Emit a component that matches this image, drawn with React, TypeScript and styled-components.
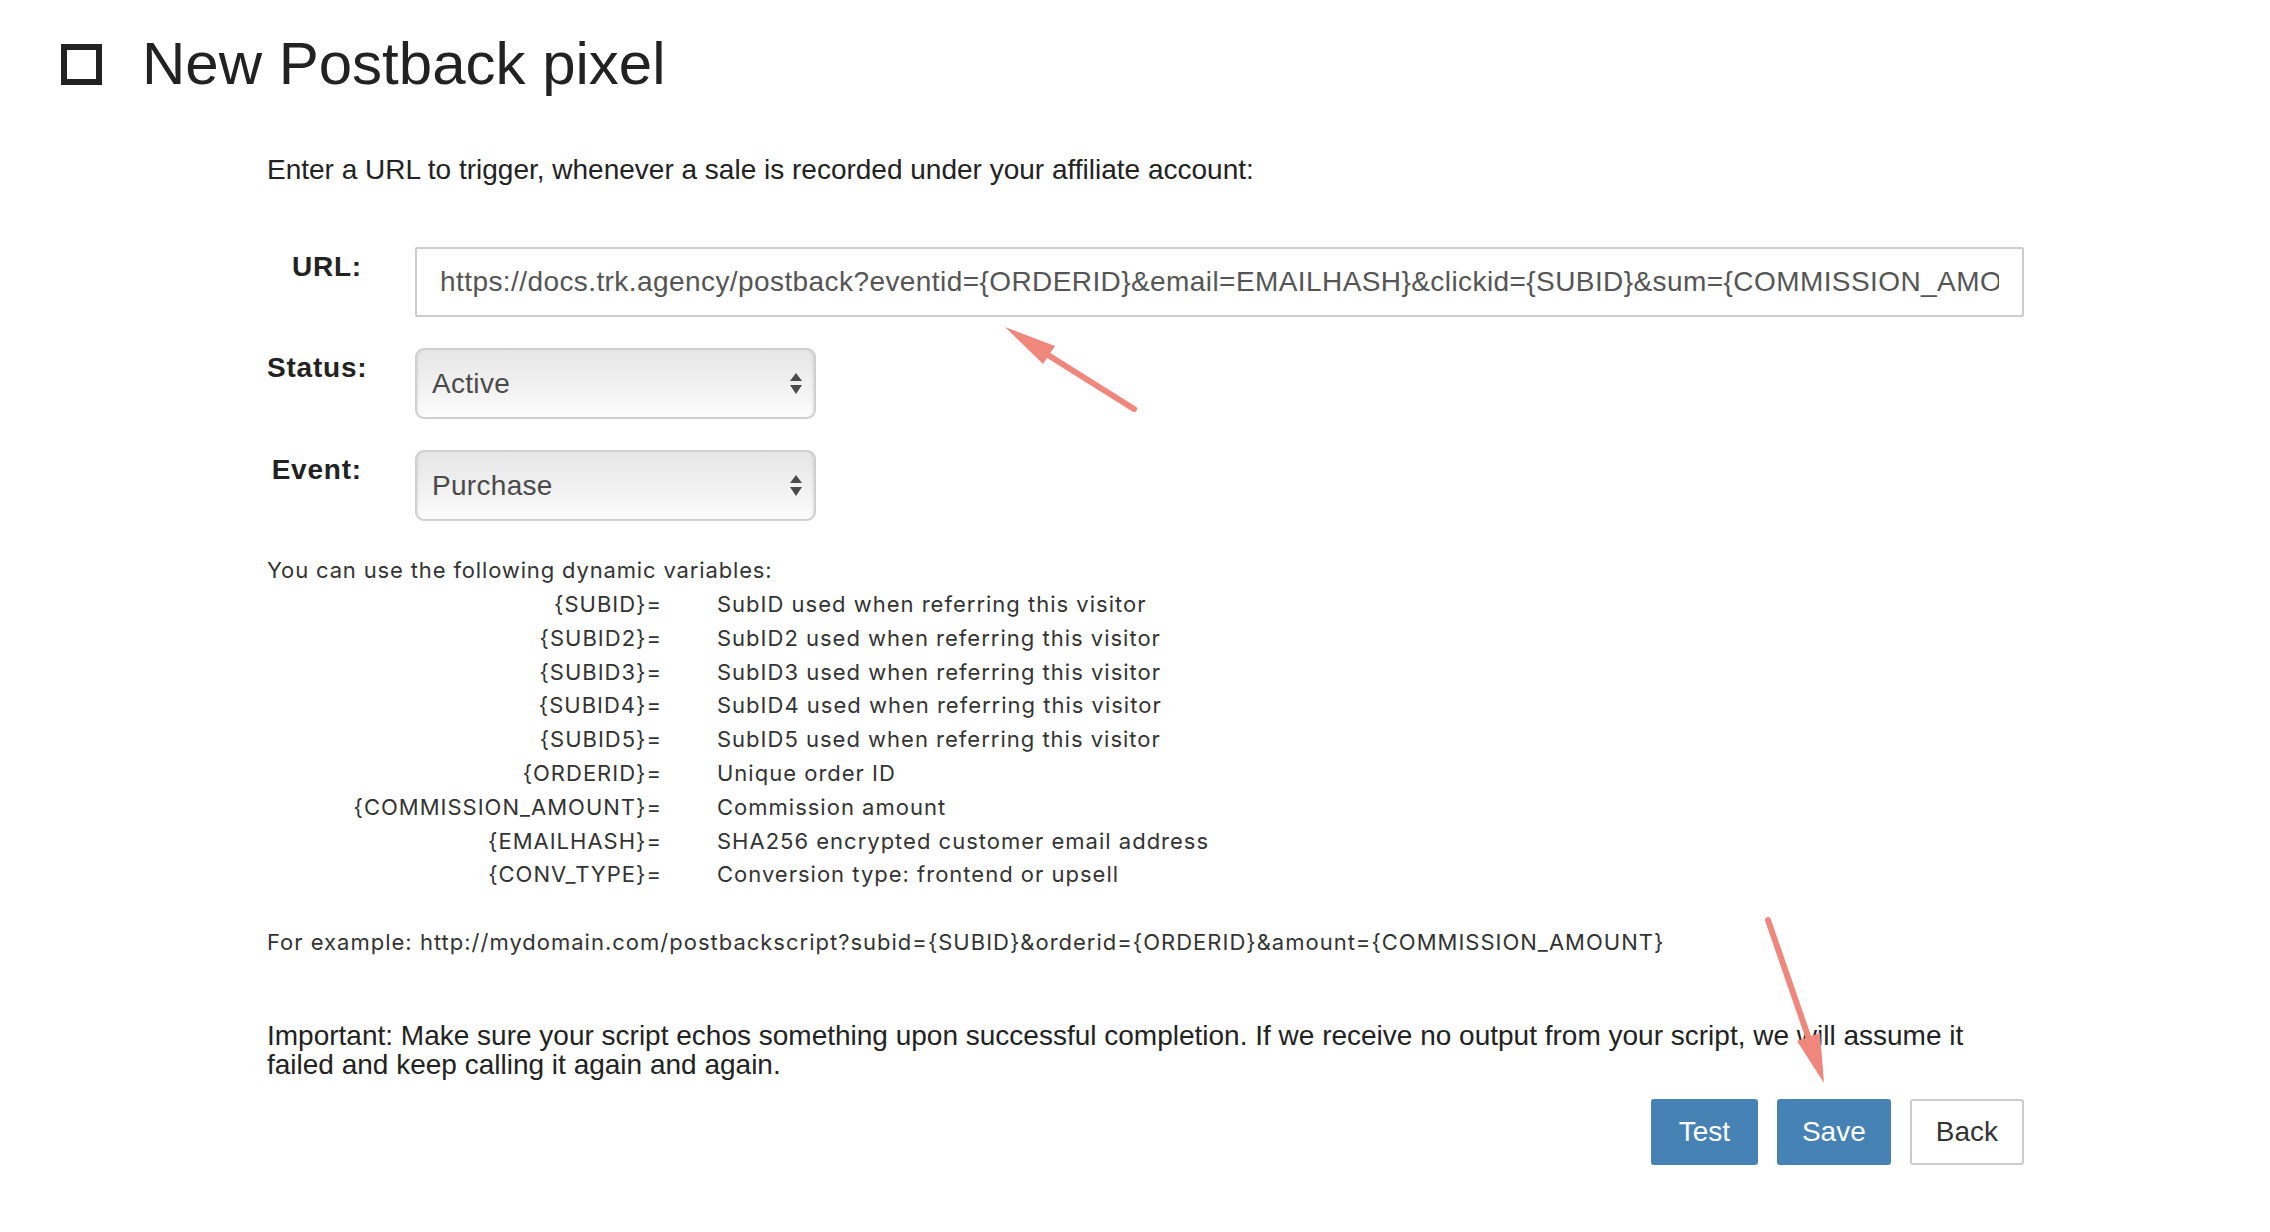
import styled, { createGlobalStyle } from 'styled-components';

const GlobalStyle = createGlobalStyle`
	html, body {
		margin: 0;
		padding: 0;
		background: #ffffff;
	}

	body {
		font-family: 'Liberation Sans', Arial, Helvetica, sans-serif;
		color: #222222;
	}
`;

const Page = styled.div`
	position: relative;
	width: 2270px;
	min-height: 1232px;
	padding-top: 34px;
	box-sizing: border-box;
`;

const Header = styled.header`
	display: flex;
	align-items: center;
	gap: 40px;
	height: 60px;
	padding-left: 61px;
`;

const CheckIcon = styled.span`
	display: block;
	width: 41px;
	height: 41px;
	border: 6px solid #222222;
	box-sizing: border-box;
`;

const Title = styled.h1`
	margin: 0;
	font-size: 60px;
	line-height: 60px;
	font-weight: 400;
	color: #222222;
`;

const Content = styled.main`
	width: 1757px;
	margin-left: 267px;
	display: flex;
	flex-direction: column;
`;

const Intro = styled.p`
	margin: 60px 0 0;
	font-size: 28px;
	line-height: 32px;
	color: #222222;
`;

const Form = styled.div`
	display: grid;
	grid-template-columns: 95px 1fr;
	column-gap: 53px;
	row-gap: 31px;
	margin-top: 61px;
	align-items: start;
`;

const Label = styled.label`
	padding-top: 4px;
	font-size: 28px;
	line-height: 32px;
	font-weight: 700;
	letter-spacing: 0.8px;
	text-align: right;
	white-space: nowrap;
	color: #222222;
`;

const UrlInput = styled.input`
	display: block;
	width: 100%;
	height: 70px;
	box-sizing: border-box;
	padding: 0 23px;
	border: 2px solid #cccccc;
	border-radius: 2px;
	background: #ffffff;
	font-family: 'Liberation Sans', Arial, Helvetica, sans-serif;
	font-size: 28px;
	letter-spacing: 0.42px;
	color: #555555;
	outline: none;
`;

const SelectBox = styled.div`
	display: flex;
	align-items: center;
	justify-content: space-between;
	width: 401px;
	height: 71px;
	box-sizing: border-box;
	padding: 0 12px 0 15px;
	border: 2px solid #cfcfcf;
	border-radius: 9px;
	background: linear-gradient(to bottom, #e6e6e6 0%, #f1f1f1 55%, #fcfcfc 100%);
	box-shadow: inset 3px 0 3px -2px rgba(0, 0, 0, 0.08), inset -3px 0 3px -2px rgba(0, 0, 0, 0.1);
	font-size: 28px;
	letter-spacing: 0.3px;
	color: #4a4a4a;
`;

const Help = styled.section`
	margin-top: 31px;
	font-family: Inter, 'Liberation Sans', sans-serif;
	font-size: 22px;
	letter-spacing: 1px;
	color: #333333;
`;

const HelpTitle = styled.div`
	line-height: 36px;
	letter-spacing: 0.85px;
`;

const VarTable = styled.div`
	display: grid;
	grid-template-columns: 395px auto;
	column-gap: 55px;
	justify-content: start;
	line-height: 33.8px;
`;

const VarKey = styled.span`
	text-align: right;
	white-space: nowrap;
`;

const VarText = styled.span`
	white-space: nowrap;
`;

const Example = styled.p`
	margin: 33px 0 0;
	font-family: Inter, 'Liberation Sans', sans-serif;
	font-size: 22px;
	letter-spacing: 1px;
	line-height: 34px;
	color: #333333;
	white-space: nowrap;
`;

const Important = styled.p`
	margin: 62px 0 0;
	font-size: 28px;
	line-height: 29px;
	color: #222222;
`;

const Actions = styled.div`
	display: flex;
	justify-content: flex-end;
	gap: 19px;
	margin-top: 20px;
`;

const Button = styled.button<{ $primary?: boolean }>`
	min-width: 107px;
	height: 66px;
	padding: 0 ${(p) => (p.$primary ? '25px' : '24px')};
	box-sizing: border-box;
	border: ${(p) => (p.$primary ? '0' : '2px solid #cccccc')};
	border-radius: 3px;
	background: ${(p) => (p.$primary ? '#4682b4' : '#ffffff')};
	color: ${(p) => (p.$primary ? '#ffffff' : '#333333')};
	font-family: 'Liberation Sans', Arial, Helvetica, sans-serif;
	font-size: 28px;
	cursor: pointer;
`;

const Annotations = styled.svg`
	position: absolute;
	top: 0;
	left: 0;
	width: 2270px;
	height: 1232px;
	pointer-events: none;
`;

const SelectArrows = () => (
	<svg width="12" height="21" viewBox="0 0 12 21">
		<path d="M6 0 L12 8 L0 8 Z" fill="#4a4a4a" />
		<path d="M0 12 L12 12 L6 21 Z" fill="#4a4a4a" />
	</svg>
);

const variables: [string, string][] = [
	['{SUBID}=', 'SubID used when referring this visitor'],
	['{SUBID2}=', 'SubID2 used when referring this visitor'],
	['{SUBID3}=', 'SubID3 used when referring this visitor'],
	['{SUBID4}=', 'SubID4 used when referring this visitor'],
	['{SUBID5}=', 'SubID5 used when referring this visitor'],
	['{ORDERID}=', 'Unique order ID'],
	['{COMMISSION_AMOUNT}=', 'Commission amount'],
	['{EMAILHASH}=', 'SHA256 encrypted customer email address'],
	['{CONV_TYPE}=', 'Conversion type: frontend or upsell'],
];

const postbackUrl =
	'https://docs.trk.agency/postback?eventid={ORDERID}&email=EMAILHASH}&clickid={SUBID}&sum={COMMISSION_AMOUNT}';

const App = () => {
	return (
		<Page>
			<GlobalStyle />

			<Header>
				<CheckIcon />
				<Title>New Postback pixel</Title>
			</Header>

			<Content>
				<Intro>Enter a URL to trigger, whenever a sale is recorded under your affiliate account:</Intro>

				<Form>
					<Label>URL:</Label>
					<UrlInput readOnly value={postbackUrl} />

					<Label>Status:</Label>
					<SelectBox>
						<span>Active</span>
						<SelectArrows />
					</SelectBox>

					<Label>Event:</Label>
					<SelectBox>
						<span>Purchase</span>
						<SelectArrows />
					</SelectBox>
				</Form>

				<Help>
					<HelpTitle>You can use the following dynamic variables:</HelpTitle>
					<VarTable>
						{variables.map(([key, text]) => [
							<VarKey key={key}>{key}</VarKey>,
							<VarText key={key + '-t'}>{text}</VarText>,
						])}
					</VarTable>
				</Help>

				<Example>
					For example: http://mydomain.com/postbackscript?subid={'{SUBID}'}&amp;orderid={'{ORDERID}'}
					&amp;amount={'{COMMISSION_AMOUNT}'}
				</Example>

				<Important>
					Important: Make sure your script echos something upon successful completion. If we receive no
					output from your script, we will assume it failed and keep calling it again and again.
				</Important>

				<Actions>
					<Button $primary>Test</Button>
					<Button $primary>Save</Button>
					<Button>Back</Button>
				</Actions>
			</Content>

			{/* red annotation arrows drawn over the form */}
			<Annotations viewBox="0 0 2270 1232">
				<line x1="1134" y1="409" x2="1040" y2="350" stroke="#f0877d" strokeWidth="6" strokeLinecap="round" />
				<polygon points="1005,327 1055,346 1043,364" fill="#f0877d" />
				<line x1="1768" y1="920" x2="1810" y2="1042" stroke="#f0877d" strokeWidth="6" strokeLinecap="round" />
				<polygon points="1824,1083 1797,1041 1820,1033" fill="#f0877d" />
			</Annotations>
		</Page>
	);
};

export default App;
